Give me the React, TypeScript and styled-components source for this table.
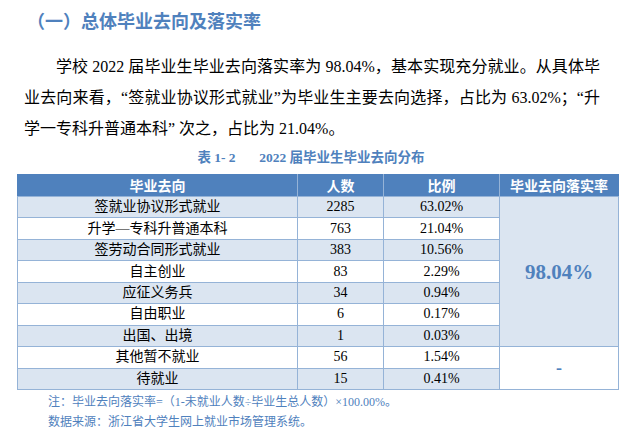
import React from "react";
import styled, { createGlobalStyle } from "styled-components";

const GlobalStyle = createGlobalStyle`
  html, body { margin: 0; padding: 0; background: #ffffff; }
  body { font-family: "Liberation Serif", "Noto Sans CJK SC", serif; color: #000; }
`;

const BLUE = "#4f81bd";
const LIGHT = "#dbe5f1";
const LINE = "#95b3d7";

const Page = styled.div`
  width: 636px;
  height: 437px;
  box-sizing: border-box;
  padding: 8px 0 0 0;
  overflow: hidden;
`;

const Title = styled.h2`
  margin: 0 0 0 27px;
  font-family: "Noto Sans CJK SC", sans-serif;
  font-size: 18px;
  font-weight: 700;
  line-height: 24px;
  color: ${BLUE};
`;

const Paragraph = styled.p`
  margin: 18.5px 0 0 24px;
  width: 576px;
  font-size: 16px;
  line-height: 31px;
  text-indent: 2em;
  text-align: justify;
`;

const Caption = styled.div`
  margin: 5.5px 0 0 0;
  padding-right: 14px;
  text-align: center;
  font-size: 13.5px;
  font-weight: 700;
  line-height: 18px;
  color: ${BLUE};
  white-space: pre;
`;

const Table = styled.table`
  margin: 7px 0 0 17px;
  width: 601px;
  table-layout: fixed;
  border-collapse: collapse;
  font-size: 14px;
`;

const HeadCell = styled.th`
  height: 22px;
  padding: 0;
  background: ${BLUE};
  color: #ffffff;
  font-family: "Noto Sans CJK SC", sans-serif;
  font-weight: 700;
  font-size: 14px;
  line-height: 16px;
  border-left: 1px solid ${LINE};
  border-right: 1px solid ${LINE};
  border-bottom: 1px solid ${LINE};
  &:first-child { border-left-color: ${BLUE}; }
  &:last-child { border-right-color: ${BLUE}; }
`;

const Row = styled.tr<{ $shade: boolean }>`
  background: ${(p) => (p.$shade ? LIGHT : "#ffffff")};
`;

const Cell = styled.td`
  height: 20.45px;
  padding: 0;
  text-align: center;
  line-height: 16px;
  border: 1px solid ${LINE};
`;

const RateCell = styled.td<{ $shade: boolean }>`
  padding: 0;
  text-align: center;
  vertical-align: middle;
  border: 1px solid ${LINE};
  background: ${(p) => (p.$shade ? LIGHT : "#ffffff")};
  color: ${BLUE};
  font-weight: 700;
`;

const BigRate = styled.span`
  font-size: 21px;
  padding-top: 2px;
  display: inline-block;
`;

const Dash = styled.span`
  font-size: 18px;
  display: inline-block;
`;

const Notes = styled.div`
  margin: 2.5px 0 0 48px;
  font-size: 12px;
  line-height: 20px;
  color: ${BLUE};
`;

const rows: [string, string, string][] = [
  ["签就业协议形式就业", "2285", "63.02%"],
  ["升学—专科升普通本科", "763", "21.04%"],
  ["签劳动合同形式就业", "383", "10.56%"],
  ["自主创业", "83", "2.29%"],
  ["应征义务兵", "34", "0.94%"],
  ["自由职业", "6", "0.17%"],
  ["出国、出境", "1", "0.03%"],
  ["其他暂不就业", "56", "1.54%"],
  ["待就业", "15", "0.41%"],
];

export default function App() {
  return (
    <>
      <GlobalStyle />
      <Page>
        <Title>（一）总体毕业去向及落实率</Title>
        <Paragraph>
          学校 2022 届毕业生毕业去向落实率为 98.04%，基本实现充分就业。从具体毕业去向来看，“签就业协议形式就业”为毕业生主要去向选择，占比为 63.02%；“升学一专科升普通本科” 次之，占比为 21.04%。
        </Paragraph>
        <Caption>{"表 1- 2       2022 届毕业生毕业去向分布"}</Caption>
        <Table>
          <colgroup>
            <col style={{ width: 280 }} />
            <col style={{ width: 86 }} />
            <col style={{ width: 116 }} />
            <col style={{ width: 119 }} />
          </colgroup>
          <thead>
            <tr>
              <HeadCell>毕业去向</HeadCell>
              <HeadCell>人数</HeadCell>
              <HeadCell>比例</HeadCell>
              <HeadCell>毕业去向落实率</HeadCell>
            </tr>
          </thead>
          <tbody>
            {rows.map((r, i) => (
              <Row key={r[0]} $shade={i % 2 === 0}>
                <Cell>{r[0]}</Cell>
                <Cell>{r[1]}</Cell>
                <Cell>{r[2]}</Cell>
                {i === 0 && (
                  <RateCell rowSpan={7} $shade>
                    <BigRate>98.04%</BigRate>
                  </RateCell>
                )}
                {i === 7 && (
                  <RateCell rowSpan={2} $shade={false}>
                    <Dash>-</Dash>
                  </RateCell>
                )}
              </Row>
            ))}
          </tbody>
        </Table>
        <Notes>
          <div>注：毕业去向落实率=（1-未就业人数÷毕业生总人数）×100.00%。</div>
          <div>数据来源：浙江省大学生网上就业市场管理系统。</div>
        </Notes>
      </Page>
    </>
  );
}
